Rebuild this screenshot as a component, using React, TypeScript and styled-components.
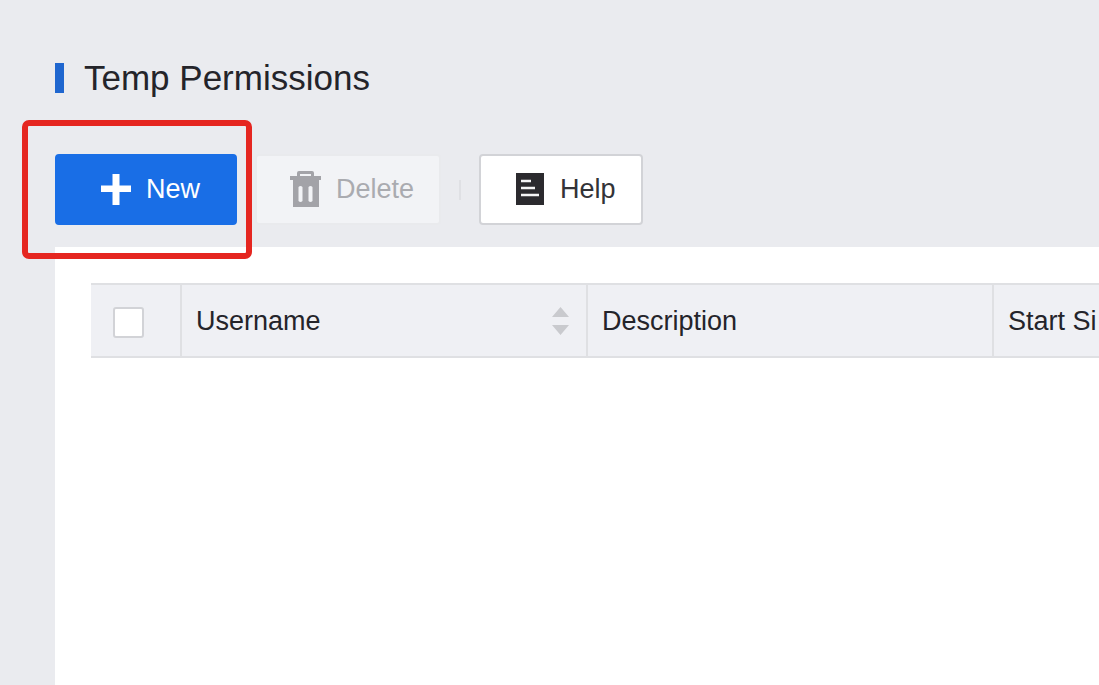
import React from "react";
import styled, { createGlobalStyle } from "styled-components";

const GlobalStyle = createGlobalStyle`
  * { box-sizing: border-box; }
  html, body, #root { height: 100%; }
  body {
    margin: 0;
    background: #eaebef;
    color: #24242a;
    font-family: "Liberation Sans", Arial, sans-serif;
    font-size: 27px;
    overflow: hidden;
  }
`;

const Page = styled.main`
  min-height: 100%;
  display: flex;
  flex-direction: column;
  padding: 60px 0 0 55px;
`;

const Title = styled.h1`
  display: flex;
  align-items: center;
  gap: 20px;
  margin: 0 0 58px;
  font-size: 35px;
  line-height: 36px;
  font-weight: 400;

  &::before {
    content: "";
    width: 9px;
    height: 30px;
    background: #1f66cf;
  }
`;

const Toolbar = styled.div`
  display: flex;
  align-items: center;
  gap: 18px;
  margin-bottom: 22px;
`;

const Highlight = styled.div`
  position: relative;
  display: flex;

  &::after {
    content: "";
    position: absolute;
    inset: -34px -15px -34px -33px;
    border: 6px solid #e52620;
    border-radius: 7px;
    pointer-events: none;
    z-index: 1;
  }
`;

const palette = {
  primary: { bg: "#196ee6", border: "#196ee6", text: "#ffffff", padding: "0 35px 2px 43px", gap: 14 },
  plain: { bg: "#ffffff", border: "#d2d3d7", text: "#333338", padding: "0 25px 2px 35px", gap: 16 },
  disabled: { bg: "#f2f3f6", border: "#e9eaed", text: "#aaabb0", padding: "0 25px 2px 33px", gap: 14 },
};

const Button = styled.button<{ $kind: keyof typeof palette }>`
  display: flex;
  align-items: center;
  gap: ${(p) => palette[p.$kind].gap}px;
  height: 71px;
  padding: ${(p) => palette[p.$kind].padding};
  border: 2px solid ${(p) => palette[p.$kind].border};
  border-radius: 4px;
  background: ${(p) => palette[p.$kind].bg};
  color: ${(p) => palette[p.$kind].text};
  font: inherit;
  line-height: 32px;

  svg {
    flex: none;
  }
`;

const Divider = styled.span`
  width: 2px;
  height: 20px;
  background: #dfe0e4;
`;

const Panel = styled.section`
  flex: 1;
  padding: 36px 0 0 36px;
  background: #ffffff;
`;

const Table = styled.table`
  width: 100%;
  table-layout: fixed;
  border-collapse: separate;
  border-spacing: 0;
`;

const HeadCell = styled.th<{ $width?: number }>`
  width: ${(p) => (p.$width ? `${p.$width}px` : "auto")};
  height: 75px;
  padding: 0 0 0 14px;
  border: 0 solid #dfe0e3;
  border-width: 2px 0;
  background: #eff0f4;
  font-weight: 400;
  line-height: 32px;
  text-align: left;
  white-space: nowrap;

  & + & {
    border-left-width: 2px;
  }
`;

const CheckCell = styled(HeadCell)`
  padding: 0 0 0 22px;
`;

const Checkbox = styled.input`
  appearance: none;
  display: block;
  width: 31px;
  height: 31px;
  margin: 4px 0 0;
  border: 2px solid #d2d3d7;
  border-radius: 3px;
  background: #ffffff;
`;

const CellContent = styled.div`
  display: flex;
  align-items: center;
  justify-content: space-between;
  padding-right: 17px;
`;

const SortButton = styled.button`
  display: flex;
  padding: 0;
  border: 0;
  background: none;
  color: #c9cace;
`;

const PlusIcon = () => (
  <svg width="32" height="32" viewBox="0 0 32 32" fill="currentColor" aria-hidden="true">
    <path d="M12.500 1h7v11.500H31v6.500H19.500V32h-7V19H1v-6.500h11.500z" />
  </svg>
);

const TrashIcon = () => (
  <svg width="32" height="36" viewBox="0 0 32 36" fill="#a3a3a8" fillRule="evenodd" aria-hidden="true">
    <path d="M7 5V2q0-2 2-2h13q2 0 2 2v3h7v4h-2v27H3V9H0V5zM10 3v2h11V3zM8.500 16v14q2 2 4 0V16q-2-2-4 0zM18.500 16v14q2 2 4 0V16q-2-2-4 0z" />
  </svg>
);

const HelpIcon = () => (
  <svg width="28" height="32" viewBox="0 0 28 32" aria-hidden="true">
    <path d="M0 0h28v32H0z" fill="#2b2a2e" />
    <path d="M5 8h10M5 15h14M5 22h18" stroke="#f5f5f6" strokeWidth="2.500" />
  </svg>
);

const SortIcon = () => (
  <svg width="17" height="28" viewBox="0 0 17 28" fill="currentColor" aria-hidden="true">
    <path d="M8.500 0 17 10H0zM0 18h17L8.500 28z" />
  </svg>
);

export default function App() {
  return (
    <>
      <GlobalStyle />
      <Page>
        <Title>Temp Permissions</Title>
        <Toolbar>
          <Highlight>
            <Button type="button" $kind="primary">
              <PlusIcon />
              New
            </Button>
          </Highlight>
          <Button type="button" $kind="disabled" disabled>
            <TrashIcon />
            Delete
          </Button>
          <Divider />
          <Button type="button" $kind="plain">
            <HelpIcon />
            Help
          </Button>
        </Toolbar>
        <Panel>
          <Table>
            <thead>
              <tr>
                <CheckCell $width={89}>
                  <Checkbox type="checkbox" aria-label="Select all" />
                </CheckCell>
                <HeadCell $width={406} scope="col">
                  <CellContent>
                    Username
                    <SortButton type="button" aria-label="Sort by username">
                      <SortIcon />
                    </SortButton>
                  </CellContent>
                </HeadCell>
                <HeadCell $width={406} scope="col">Description</HeadCell>
                <HeadCell scope="col">Start Si</HeadCell>
              </tr>
            </thead>
          </Table>
        </Panel>
      </Page>
    </>
  );
}
